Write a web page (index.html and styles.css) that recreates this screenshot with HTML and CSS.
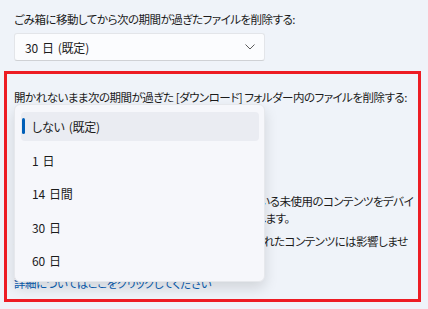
FILE: index.html
```html
<!DOCTYPE html>
<html lang="ja">
<head>
    <meta charset="UTF-8">
    <meta name="viewport" content="width=device-width, initial-scale=1.0">
    <title>ストレージ センサー</title>
    <link rel="stylesheet" href="styles.css">
</head>
<body>
    <div id="page">
        <div class="label">ごみ箱に移動してから次の期間が過ぎたファイルを削除する:</div>
        <div class="select">
            <span>30 日 (既定)</span>
            <svg class="chevron" width="10" height="6" viewBox="0 0 10 6">
                <path d="M0.5 0.5 L5 5 L9.5 0.5" fill="none" stroke="#5c5c5c" stroke-width="1"/>
            </svg>
        </div>

        <div id="highlight">
            <div class="label">開かれないまま次の期間が過ぎた [ダウンロード] フォルダー内のファイルを削除する:</div>
            <div class="select hidden-select"><span>しない (既定)</span></div>

            <div class="heading">ローカルで使用可能なクラウド コンテンツ</div>
            <p class="desc">
                <span class="line">ストレージ センサーは、クラウドにバックアップされている未使用のコンテンツをデバイ</span>
                <span class="line">スから削除して、ローカル ディスクの空き領域を解放します。</span>
            </p>
            <p class="desc">
                <span class="line">本設定は [常にこのデバイス上に保持する] とマークされたコンテンツには影響しませ</span>
                <span class="line">ん。</span>
            </p>
            <a class="link" href="#">詳細についてはここをクリックしてください</a>

            <!-- 開いているドロップダウン -->
            <div id="menu">
                <div class="item selected">しない (既定)</div>
                <div class="item">1 日</div>
                <div class="item">14 日間</div>
                <div class="item">30 日</div>
                <div class="item">60 日</div>
            </div>
        </div>
    </div>
</body>
</html>
```

FILE: styles.css
```css
body {
    margin: 0;
    background: #eff3f9;
    font-family: "Noto Sans CJK JP", "Noto Sans", sans-serif;
    font-feature-settings: "palt";
    font-size: 11.5px;
    letter-spacing: -0.5px;
    color: #1b1b1b;
    overflow: hidden;
}

#page {
    padding: 10px 0 0 0;
}

.label {
    padding-left: 14px;
    line-height: 18px;
    white-space: nowrap;
}

.select {
    margin: 5px 0 0 14px;
    height: 26px;
    background: #fbfcfe;
    border: 1px solid #e3e5e9;
    border-bottom-color: #cfd1d5;
    border-radius: 3px;
    display: flex;
    align-items: center;
    justify-content: space-between;
    padding: 0 9px 0 10px;
    box-sizing: content-box;
    width: 230px;
    font-size: 12px;
    letter-spacing: -0.2px;
    word-spacing: 1.5px;
}

.chevron {
    display: block;
}

#highlight {
    position: relative;
    margin: 10px 7px 0 4px;
    height: 211px;
    border: 3px solid #ed1c24;
    padding-top: 14px;
    overflow: hidden;
}

#highlight .label {
    padding-left: 7px;
}

.hidden-select {
    margin-left: 7px;
}

.heading {
    margin: 30px 0 0 7px;
    line-height: 18px;
}

.desc {
    margin: 6px 0 0 7px;
    line-height: 17px;
}

.line {
    display: block;
    white-space: nowrap;
}

.link {
    display: block;
    margin: 8px 0 0 7px;
    color: #0a5fb4;
    text-decoration: none;
    line-height: 17px;
}

#menu {
    position: absolute;
    left: 7px;
    top: 30px;
    width: 251px;
    box-sizing: border-box;
    padding: 7px 5px 6px 6px;
    background: #f6f7fb;
    border: 1px solid #e6e8ec;
    border-radius: 6px;
    box-shadow: 0 6px 14px rgba(0, 0, 0, 0.13);
}

.item {
    position: relative;
    height: 29px;
    line-height: 29px;
    padding-left: 11px;
    border-radius: 4px;
    margin-bottom: 4.5px;
    font-size: 12px;
    letter-spacing: -0.2px;
    word-spacing: 1.5px;
}

.item:last-child {
    margin-bottom: 0;
}

.selected {
    background: #eaecf2;
}

.selected::before {
    content: "";
    position: absolute;
    left: 1px;
    top: 6px;
    width: 3px;
    height: 16px;
    border-radius: 2px;
    background: #005fb8;
}
```
